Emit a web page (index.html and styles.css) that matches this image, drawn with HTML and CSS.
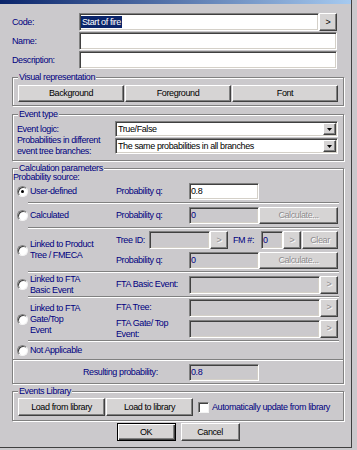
FILE: index.html
```html
<!DOCTYPE html>
<html lang="en">
<head>
    <meta charset="UTF-8">
    <meta name="viewport" content="width=device-width, initial-scale=1.0">
    <title>Event Properties</title>
    <link rel="stylesheet" href="styles.css">
</head>
<body>
    <div class="window">
        <div class="titlebar"></div>
        <div class="dialog">
            <div class="fields">
                <label class="lbl">Code:</label>
                <div class="with-btn">
                    <div class="edit code"><span class="selected">Start of fire</span></div>
                    <button class="btn arrow">&gt;</button>
                </div>
                <label class="lbl">Name:</label>
                <div class="edit"></div>
                <label class="lbl">Description:</label>
                <div class="edit"></div>
            </div>

            <fieldset class="group">
                <legend>Visual representation</legend>
                <div class="visual">
                    <button class="btn">Background</button>
                    <button class="btn">Foreground</button>
                    <button class="btn">Font</button>
                </div>
            </fieldset>

            <fieldset class="group">
                <legend>Event type</legend>
                <div class="event-type">
                    <span class="lbl">Event logic:</span>
                    <div class="select">
                        <span class="value">True/False</span>
                        <span class="drop"><svg width="5" height="3" viewBox="0 0 5 3"><path d="M0 0h5L2.5 3z" fill="#000"/></svg></span>
                    </div>
                    <span class="lbl two">Probabilities in different<br>event tree branches:</span>
                    <div class="select">
                        <span class="value">The same probabilities in all branches</span>
                        <span class="drop"><svg width="5" height="3" viewBox="0 0 5 3"><path d="M0 0h5L2.5 3z" fill="#000"/></svg></span>
                    </div>
                </div>
            </fieldset>

            <fieldset class="group calc">
                <legend>Calculation parameters</legend>
                <div class="source">Probability source:</div>

                <div class="opt user">
                    <label class="choice"><span class="radio on"></span>User-defined</label>
                    <div class="line">
                        <span class="plabel">Probability q:</span>
                        <span class="edit num">0.8</span>
                    </div>
                </div>
                <div class="sep"></div>

                <div class="opt">
                    <label class="choice"><span class="radio"></span>Calculated</label>
                    <div class="line">
                        <span class="plabel">Probability q:</span>
                        <span class="edit num off">0</span>
                        <button class="btn wide" disabled>Calculate...</button>
                    </div>
                </div>
                <div class="sep"></div>

                <div class="opt tall">
                    <label class="choice"><span class="radio"></span><span>Linked to Product<br>Tree / FMECA</span></label>
                    <div class="stack">
                        <div class="line">
                            <span class="tlabel">Tree ID:</span>
                            <span class="edit off tree"></span>
                            <button class="btn arrow" disabled>&gt;</button>
                            <span class="fm">FM #:</span>
                            <span class="edit off fmno">0</span>
                            <button class="btn arrow" disabled>&gt;</button>
                            <button class="btn clear" disabled>Clear</button>
                        </div>
                        <div class="line">
                            <span class="plabel">Probability q:</span>
                            <span class="edit num off">0</span>
                            <button class="btn wide" disabled>Calculate...</button>
                        </div>
                    </div>
                </div>
                <div class="sep"></div>

                <div class="opt">
                    <label class="choice"><span class="radio"></span><span>Linked to FTA<br>Basic Event</span></label>
                    <div class="line">
                        <span class="plabel">FTA Basic Event:</span>
                        <span class="edit off long"></span>
                        <button class="btn arrow" disabled>&gt;</button>
                    </div>
                </div>
                <div class="sep"></div>

                <div class="opt tall">
                    <label class="choice"><span class="radio"></span><span>Linked to FTA<br>Gate/Top<br>Event</span></label>
                    <div class="stack tight">
                        <div class="line">
                            <span class="plabel">FTA Tree:</span>
                            <span class="edit off long"></span>
                            <button class="btn arrow" disabled>&gt;</button>
                        </div>
                        <div class="line">
                            <span class="plabel">FTA Gate/ Top<br>Event:</span>
                            <span class="edit off long"></span>
                            <button class="btn arrow" disabled>&gt;</button>
                        </div>
                    </div>
                </div>
                <div class="sep"></div>

                <div class="opt short">
                    <label class="choice"><span class="radio"></span>Not Applicable</label>
                </div>
                <div class="rule"></div>

                <div class="result">
                    <span class="rlabel">Resulting probability:</span>
                    <span class="edit num off">0.8</span>
                </div>
            </fieldset>

            <fieldset class="group library-group">
                <legend>Events Library</legend>
                <div class="library">
                    <button class="btn lib">Load from library</button>
                    <button class="btn lib">Load to library</button>
                    <label class="auto"><span class="check"></span>Automatically update from library</label>
                </div>
            </fieldset>

            <div class="actions">
                <button class="btn default">OK</button>
                <button class="btn">Cancel</button>
            </div>
        </div>
    </div>
</body>
</html>
```

FILE: styles.css
```css
* {
    box-sizing: border-box;
}

body {
    margin: 0;
    background-color: #cbc9cc;
    font-family: "Liberation Sans", Arial, sans-serif;
    font-size: 9px;
    letter-spacing: -0.4px;
    line-height: 11px;
    color: #000080;
}

.window {
    width: 352px;
    height: 448px;
    border-right: 1px solid #404040;
    border-bottom: 1px solid #404040;
}

.titlebar {
    height: 4px;
    background: linear-gradient(to right, #0a246a, #a6caf0);
}

.dialog {
    padding: 9px 0 0 12px;
    white-space: nowrap;
}

/* top text fields */
.fields {
    display: grid;
    grid-template-columns: 67px 258px;
    row-gap: 1px;
    align-items: center;
}

.with-btn {
    display: flex;
}

.with-btn .edit {
    flex: 1;
}

.edit {
    display: flex;
    align-items: center;
    height: 18px;
    padding: 0 1px;
    background: #fff;
    border: 1px solid;
    border-color: #808080 #fff #fff #808080;
    box-shadow: inset 1px 1px #404040, inset -1px -1px #d4d0c8;
    color: #000;
}

.edit.off {
    background: #cbc9cc;
    color: #000080;
}

.selected {
    padding: 0 1px;
    line-height: 12px;
    background: #0a246a;
    color: #fff;
}

/* buttons */
.btn {
    display: flex;
    align-items: center;
    justify-content: center;
    height: 17px;
    padding: 0;
    font: inherit;
    letter-spacing: inherit;
    color: #000;
    background: #d6d4d4;
    border: 1px solid;
    border-color: #fff #404040 #404040 #fff;
    box-shadow: inset -1px -1px #808080;
}

.btn:disabled {
    color: #8e8c8e;
    text-shadow: 1px 1px #fff;
}

.btn.arrow {
    width: 18px;
    height: 18px;
    flex: none;
    font-size: 9px;
}

.btn.default {
    border-color: #000;
    box-shadow: inset 1px 1px #fff, inset -1px -1px #404040, inset -2px -2px #808080;
}

/* group boxes */
.group {
    width: 332px;
    min-width: 0;
    margin: 2px 0 0;
    padding: 0;
    border: 1px solid #808080;
    box-shadow: 1px 1px #fff, inset 1px 1px #fff;
}

.group legend {
    margin-left: 5px;
    padding: 0 1px;
    line-height: 12px;
    background: #cbc9cc;
}

.visual {
    display: grid;
    grid-template-columns: repeat(3, 1fr);
    gap: 1px;
    padding: 2px 5px 3px;
}

.event-type {
    display: grid;
    grid-template-columns: 98px 223px;
    row-gap: 1px;
    align-items: center;
    padding: 1px 4px 6px;
}

.lbl.two {
    margin: -3px 0;
}

.select {
    display: flex;
    align-items: center;
    height: 16px;
    padding-right: 1px;
    background: #fff;
    border: 1px solid;
    border-color: #808080 #fff #fff #808080;
    box-shadow: inset 1px 1px #404040, inset -1px -1px #d4d0c8;
    color: #000;
}

.select .value {
    flex: 1;
    padding-left: 2px;
}

.drop {
    display: flex;
    align-items: center;
    justify-content: center;
    width: 13px;
    height: 12px;
    background: #d6d4d4;
    border: 1px solid;
    border-color: #fff #404040 #404040 #fff;
    box-shadow: inset -1px -1px #808080;
}

/* calculation parameters */
.group.calc {
    margin-top: 1px;
}

.source {
    height: 8px;
    margin-top: -2px;
}

.opt {
    display: grid;
    grid-template-columns: 99px 222px;
    align-items: center;
    height: 23px;
    padding-left: 4px;
}

.opt.user {
    height: 22px;
}

.opt.tall {
    height: 42px;
}

.opt.short {
    height: 17px;
}

.choice {
    display: flex;
    align-items: center;
    gap: 2px;
}

.radio {
    position: relative;
    flex: none;
    width: 11px;
    height: 11px;
    border-radius: 50%;
    background: #fff;
    border: 1px solid;
    border-color: #808080 #f4f4f4 #f4f4f4 #808080;
    box-shadow: inset 1px 1px #404040;
}

.radio.on::after {
    content: "";
    position: absolute;
    left: 3px;
    top: 3px;
    width: 3px;
    height: 3px;
    border-radius: 50%;
    background: #000;
}

.line {
    display: flex;
    align-items: center;
}

.stack {
    display: flex;
    flex-direction: column;
    gap: 3px;
}

.stack.tight {
    gap: 1px;
}

.plabel {
    width: 73px;
    flex: none;
}

.edit.num {
    width: 70px;
    height: 17px;
}

.btn.wide {
    width: 79px;
}

.tlabel {
    width: 33px;
}

.edit.tree {
    width: 61px;
    height: 18px;
}

.fm {
    width: 28px;
    margin-left: 5px;
}

.edit.fmno {
    width: 22px;
    height: 18px;
}

.btn.clear {
    width: 36px;
    height: 18px;
    margin-left: 1px;
}

.edit.long {
    width: 131px;
}

.sep {
    height: 2px;
    margin: 0 4px 0 15px;
    border-top: 1px solid #808080;
    border-bottom: 1px solid #fff;
}

.rule {
    height: 2px;
    border-top: 1px solid #808080;
    border-bottom: 1px solid #fff;
}

.result {
    display: flex;
    align-items: center;
    height: 22px;
    padding-left: 70px;
}

.rlabel {
    width: 106px;
}

/* library */
.library-group {
    margin-top: 1px;
}

.library {
    display: flex;
    align-items: center;
    gap: 1px;
    padding: 1px 5px 4px;
}

.btn.lib {
    width: 87px;
    height: 18px;
}

.auto {
    display: flex;
    align-items: center;
    gap: 3px;
    margin-left: 4px;
}

.check {
    width: 11px;
    height: 11px;
    background: #fff;
    border: 1px solid;
    border-color: #808080 #f4f4f4 #f4f4f4 #808080;
    box-shadow: inset 1px 1px #404040;
}

.actions {
    display: flex;
    justify-content: center;
    gap: 5px;
    width: 332px;
    margin-top: 2px;
}

.actions .btn {
    width: 59px;
    height: 18px;
}
```
